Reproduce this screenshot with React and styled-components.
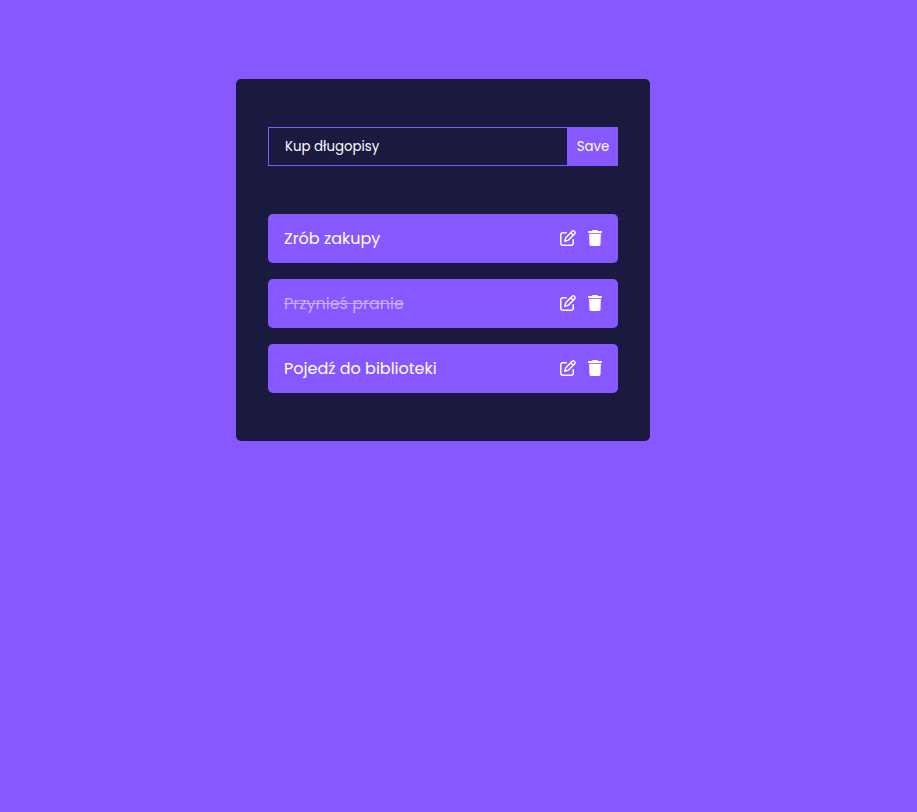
import React from "react";
import styled, { createGlobalStyle } from "styled-components";
import { FaRegPenToSquare } from "react-icons/fa6";

const GlobalStyle = createGlobalStyle`
  * { box-sizing: border-box; margin: 0; padding: 0; }
  body {
    background: #8758ff;
    font-family: Poppins, "Open Sans", sans-serif;
    -webkit-font-smoothing: antialiased;
  }
`;

const Card = styled.main`
  width: 414px;
  height: 362px;
  margin: 79px 0 0 236px;
  padding: 48px 32px;
  background: #1a1a40;
  border-radius: 5px;
`;

const Form = styled.form`
  display: flex;
  height: 39px;
  margin-bottom: 48px;
`;

const Input = styled.input`
  width: 299px;
  padding: 0 16px;
  border: 1px solid #8758ff;
  border-right: 0;
  outline: none;
  background: none;
  color: #fff;
  font: 13.333px Poppins, "Open Sans", sans-serif;
`;

const Save = styled.button`
  width: 51px;
  padding-left: 1px;
  border: 0;
  background: #8758ff;
  color: #fff;
  font: 13.333px Poppins, "Open Sans", sans-serif;
  cursor: pointer;
`;

const Row = styled.div`
  display: flex;
  align-items: center;
  justify-content: space-between;
  height: 49px;
  margin-bottom: 16px;
  padding: 0 16px;
  border-radius: 5px;
  background: #8758ff;
  color: #fff;
`;

const Label = styled.span`
  font-size: 16px;
  color: ${(p) => (p.$done ? "#c5aeff" : "#fff")};
  text-decoration: ${(p) => (p.$done ? "line-through" : "none")};
`;

const Actions = styled.div`
  display: flex;
  gap: 12px;
  padding-bottom: 1px;
`;

const EditIcon = styled(FaRegPenToSquare)`
  width: 16px;
  height: 16px;
`;

const TrashSvg = styled.svg`
  width: 14px;
  height: 16px;
  fill: currentColor;
`;

function TrashIcon() {
  return (
    <TrashSvg viewBox="0 0 448 512" aria-hidden="true">
      <path d="M135.2 17.69C140.6 6.848 151.7 0 163.8 0H284.2C296.3 0 307.4 6.848 312.8 17.69L320 32H416C433.7 32 448 46.33 448 64C448 81.67 433.7 96 416 96H32C14.33 96 0 81.67 0 64C0 46.33 14.33 32 32 32H128L135.2 17.69zM36 116H412L400 466.1C398 492.3 377 512 352 512H96C71 512 50 492.3 48 466.1z" />
    </TrashSvg>
  );
}

const tasks = [
  { text: "Zrób zakupy" },
  { text: "Przynieś pranie", done: true },
  { text: "Pojedź do biblioteki" },
];

export default function App() {
  return (
    <>
      <GlobalStyle />
      <Card>
        <Form>
          <Input defaultValue="Kup długopisy" />
          <Save type="button">Save</Save>
        </Form>
        {tasks.map((task) => (
          <Row key={task.text}>
            <Label $done={task.done}>{task.text}</Label>
            <Actions>
              <EditIcon />
              <TrashIcon />
            </Actions>
          </Row>
        ))}
      </Card>
    </>
  );
}
